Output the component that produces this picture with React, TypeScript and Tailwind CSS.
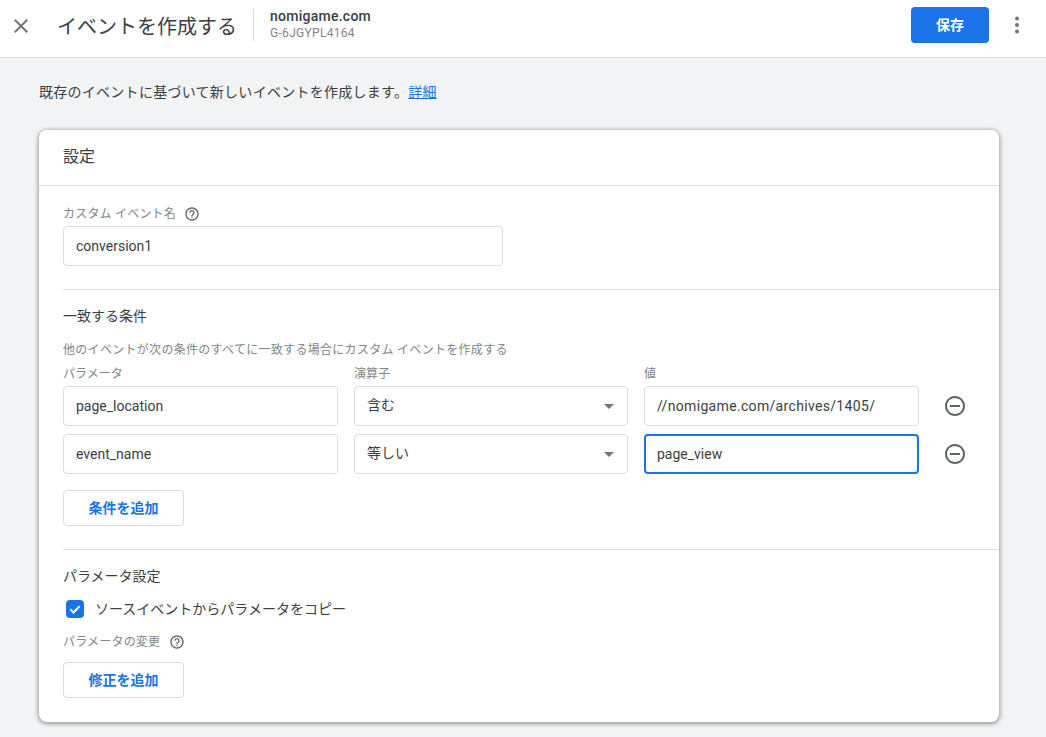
const font = { fontFamily: "Roboto, 'Noto Sans CJK JP', sans-serif" };

function HelpIcon() {
  return (
    <svg width="16" height="16" viewBox="0 0 24 24" fill="#5f6368" className="shrink-0">
      <path d="M11 18h2v-2h-2v2zm1-16C6.48 2 2 6.48 2 12s4.48 10 10 10 10-4.48 10-10S17.52 2 12 2zm0 18c-4.41 0-8-3.59-8-8s3.59-8 8-8 8 3.59 8 8-3.59 8-8 8zm0-14c-2.21 0-4 1.79-4 4h2c0-1.1.9-2 2-2s2 .9 2 2c0 2-3 1.75-3 5h2c0-2.25 3-2.5 3-5 0-2.21-1.79-4-4-4z" />
    </svg>
  );
}

function MinusIcon() {
  return (
    <svg width="24" height="24" viewBox="0 0 24 24" fill="#5f6368" className="shrink-0">
      <path d="M7 11v2h10v-2H7zm5-9C6.48 2 2 6.48 2 12s4.48 10 10 10 10-4.48 10-10S17.52 2 12 2zm0 18c-4.41 0-8-3.59-8-8s3.59-8 8-8 8 3.59 8 8-3.59 8-8 8z" />
    </svg>
  );
}

function Field({ value, width, focused, spaced }: { value: string; width: string; focused?: boolean; spaced?: boolean }) {
  return (
    <div
      className={`flex h-10 items-center rounded bg-white text-sm text-[#3c4043] ${width} ${
        spaced ? "tracking-[0.33px]" : ""
      } ${focused ? "border-2 border-[#1a73e8] pl-[11px]" : "border border-[#dadce0] pl-[12px]"}`}
    >
      {value}
    </div>
  );
}

function SelectField({ value }: { value: string }) {
  return (
    <div className="flex h-10 w-[274px] items-center justify-between rounded border border-[#dadce0] bg-white pl-[12px] pr-[13px] text-sm text-[#3c4043]">
      <span className="-mt-0.5">{value}</span>
      <span className="h-0 w-0 border-x-[5px] border-t-[5px] border-x-transparent border-t-[#757575]" />
    </div>
  );
}

function OutlineButton({ label }: { label: string }) {
  return (
    <button className="flex h-9 w-[121px] items-center justify-center rounded border border-[#dadce0] bg-white text-sm font-bold text-[#1a73e8]">
      {label}
    </button>
  );
}

function ConditionRow({ param, op, value, focused, spaced }: { param: string; op: string; value: string; focused?: boolean; spaced?: boolean }) {
  return (
    <div className="flex items-center">
      <Field value={param} width="w-[275px]" />
      <div className="ml-4">
        <SelectField value={op} />
      </div>
      <div className="ml-4">
        <Field value={value} width="w-[275px]" focused={focused} spaced={spaced} />
      </div>
      <div className="ml-6">
        <MinusIcon />
      </div>
    </div>
  );
}

export default function App() {
  return (
    <div className="flex h-[737px] w-[1046px] flex-col overflow-hidden bg-[#f1f3f4]" style={font}>
      <header className="flex h-[58px] shrink-0 items-center border-b border-[#dadce0] bg-white pb-[7px]">
        <svg width="24" height="24" viewBox="0 0 24 24" fill="#757575" className="ml-[9px] mt-[2px] shrink-0">
          <path d="M19 6.41 17.59 5 12 10.59 6.41 5 5 6.41 10.59 12 5 17.59 6.41 19 12 13.41 17.59 19 19 17.59 13.41 12z" />
        </svg>
        <h1 className="ml-[24px] mt-[3px] text-xl leading-none text-[#3c4043]">イベントを作成する</h1>
        <div className="ml-[16px] h-8 w-px bg-[#dadce0]" />
        <div className="ml-[16px] flex flex-col">
          <span className="text-sm font-medium leading-[17px] tracking-[0.25px] text-[#3c4043]">nomigame.com</span>
          <span className="text-xs leading-[17px] tracking-[0.3px] text-[#80868b]">G-6JGYPL4164</span>
        </div>
        <button className="ml-auto h-9 w-[78px] rounded bg-[#1a73e8] text-sm font-bold text-white">保存</button>
        <svg width="24" height="24" viewBox="0 0 24 24" fill="#757575" className="ml-[16px] mr-[17px] shrink-0">
          <circle cx="12" cy="5.5" r="2" />
          <circle cx="12" cy="12" r="2" />
          <circle cx="12" cy="18.5" r="2" />
        </svg>
      </header>

      <main className="flex flex-col pl-[39px]">
        <p className="mt-[24px] text-sm leading-5 tracking-[0.27px] text-[#3c4043]">
          既存のイベントに基づいて新しいイベントを作成します。
          <a className="text-[#1a73e8] underline">詳細</a>
        </p>

        <section className="mt-[28px] h-[592px] w-[960px] rounded-lg bg-white shadow-[0_1px_4px_1px_rgba(60,64,67,0.5)]">
          <div className="flex h-[56px] items-center border-b border-[#dadce0] pb-[2px] pl-6 text-base text-[#3c4043]">設定</div>

          <div className="ml-6 border-b border-[#dadce0] pb-[23px] pt-[20px]">
            <div className="flex h-4 items-center gap-[8px] text-xs tracking-[0.2px] text-[#80868b]">
              カスタム イベント名 <HelpIcon />
            </div>
            <div className="mt-[4px]">
              <Field value="conversion1" width="w-[440px]" />
            </div>
          </div>

          <div className="ml-6 border-b border-[#dadce0] pb-[23px]">
            <h2 className="mt-[16px] text-sm leading-5 text-[#3c4043]">一致する条件</h2>
            <p className="mt-[16px] text-xs leading-4 tracking-[0.3px] text-[#80868b]">
              他のイベントが次の条件のすべてに一致する場合にカスタム イベントを作成する
            </p>
            <div className="mt-[8px] flex text-xs leading-4 text-[#80868b]">
              <span className="w-[291px]">パラメータ</span>
              <span className="w-[290px]">演算子</span>
              <span>値</span>
            </div>
            <div className="mt-[4px] flex flex-col gap-2">
              <ConditionRow param="page_location" op="含む" value="//nomigame.com/archives/1405/" spaced />
              <ConditionRow param="event_name" op="等しい" value="page_view" focused />
            </div>
            <div className="mt-4">
              <OutlineButton label="条件を追加" />
            </div>
          </div>

          <div className="mx-6">
            <h2 className="mt-[16px] text-sm leading-5 text-[#3c4043]">パラメータ設定</h2>
            <label className="ml-[3px] mt-[14px] flex items-center gap-[11px] text-sm leading-[18px] text-[#3c4043]">
              <span className="flex h-[18px] w-[18px] items-center justify-center rounded-sm bg-[#1a73e8]">
                <svg width="14" height="14" viewBox="0 0 24 24" fill="none" stroke="white" strokeWidth="3.4">
                  <path d="M4 12.5l5.5 5.5L20 7" />
                </svg>
              </span>
              ソースイベントからパラメータをコピー
            </label>
            <div className="mt-[16px] flex h-4 items-center gap-[9px] text-xs tracking-[0.2px] text-[#80868b]">
              パラメータの変更 <HelpIcon />
            </div>
            <div className="mt-[12px]">
              <OutlineButton label="修正を追加" />
            </div>
          </div>
        </section>
      </main>
    </div>
  );
}
